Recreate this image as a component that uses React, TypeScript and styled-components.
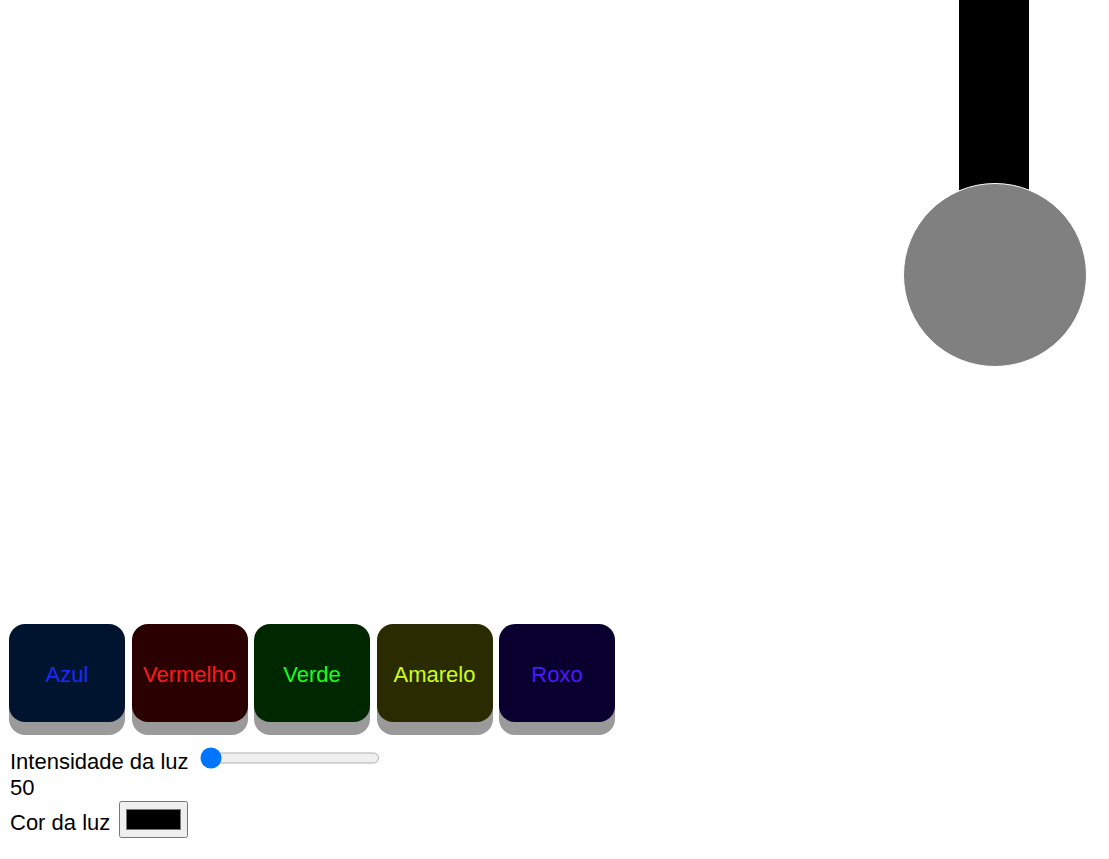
import styled, { createGlobalStyle } from "styled-components";

const GlobalStyle = createGlobalStyle`
  body {
    margin: 0;
    background: #ffffff;
    font-family: "Liberation Sans", Arial, sans-serif;
    color: #000000;
  }
`;

const Page = styled.div`
  display: flex;
  flex-direction: column;
  padding: 0 8px 8px 10px;
`;

const Scene = styled.div`
  height: 624px;
  display: flex;
  flex-direction: column;
  align-items: flex-end;
  padding-right: 14px;
`;

const Lamp = styled.div`
  display: flex;
  flex-direction: column;
  align-items: center;
  width: 184px;
`;

const Cord = styled.div`
  width: 70px;
  height: 190px;
  margin-left: -2px;
  background: #000000;
`;

const Bulb = styled.div<{ glow: string }>`
  width: 182px;
  height: 182px;
  margin-top: -7px;
  border-radius: 50%;
  border: 1px solid #ffffff;
  background: ${(p) => p.glow};
`;

const ButtonRow = styled.div`
  display: flex;
  gap: 6.5px;
  margin-left: -1px;
`;

const ColorButton = styled.button<{ bg: string; fg: string }>`
  all: unset;
  box-sizing: border-box;
  width: 116px;
  height: 98px;
  padding-top: 4px;
  display: flex;
  justify-content: center;
  align-items: center;
  border-radius: 16px;
  background: ${(p) => p.bg};
  color: ${(p) => p.fg};
  font-family: "Liberation Sans", Arial, sans-serif;
  font-size: 22px;
  box-shadow: 0 13px 0 #9a9a9a;
  cursor: pointer;
`;

const Controls = styled.div`
  margin-top: 25px;
  font-size: 22px;
`;

const Line = styled.div`
  display: block;
`;

const Range = styled.input`
  zoom: 1.375;
  width: 131px;
  margin: 0 2px 0 4px;
`;

const ColorPick = styled.input`
  zoom: 1.375;
  margin: 0 0 0 2px;
`;

const buttons = [
  { label: "Azul", bg: "#001430", fg: "#1a2aff" },
  { label: "Vermelho", bg: "#2a0000", fg: "#ff1a1a" },
  { label: "Verde", bg: "#002800", fg: "#1aff1a" },
  { label: "Amarelo", bg: "#2b2b00", fg: "#ccff1a" },
  { label: "Roxo", bg: "#0a0030", fg: "#4a1aff" },
];

function App() {
  return (
    <Page>
      <GlobalStyle />
      <Scene>
        <Lamp>
          <Cord />
          <Bulb glow="#808080" />
        </Lamp>
      </Scene>
      <ButtonRow>
        {buttons.map((b) => (
          <ColorButton key={b.label} bg={b.bg} fg={b.fg}>
            {b.label}
          </ColorButton>
        ))}
      </ButtonRow>
      <Controls>
        <Line>
          Intensidade da luz <Range type="range" min={50} max={255} defaultValue={50} />
        </Line>
        <Line>50</Line>
        <Line>
          Cor da luz <ColorPick type="color" defaultValue="#000000" />
        </Line>
      </Controls>
    </Page>
  );
}

export default App;
